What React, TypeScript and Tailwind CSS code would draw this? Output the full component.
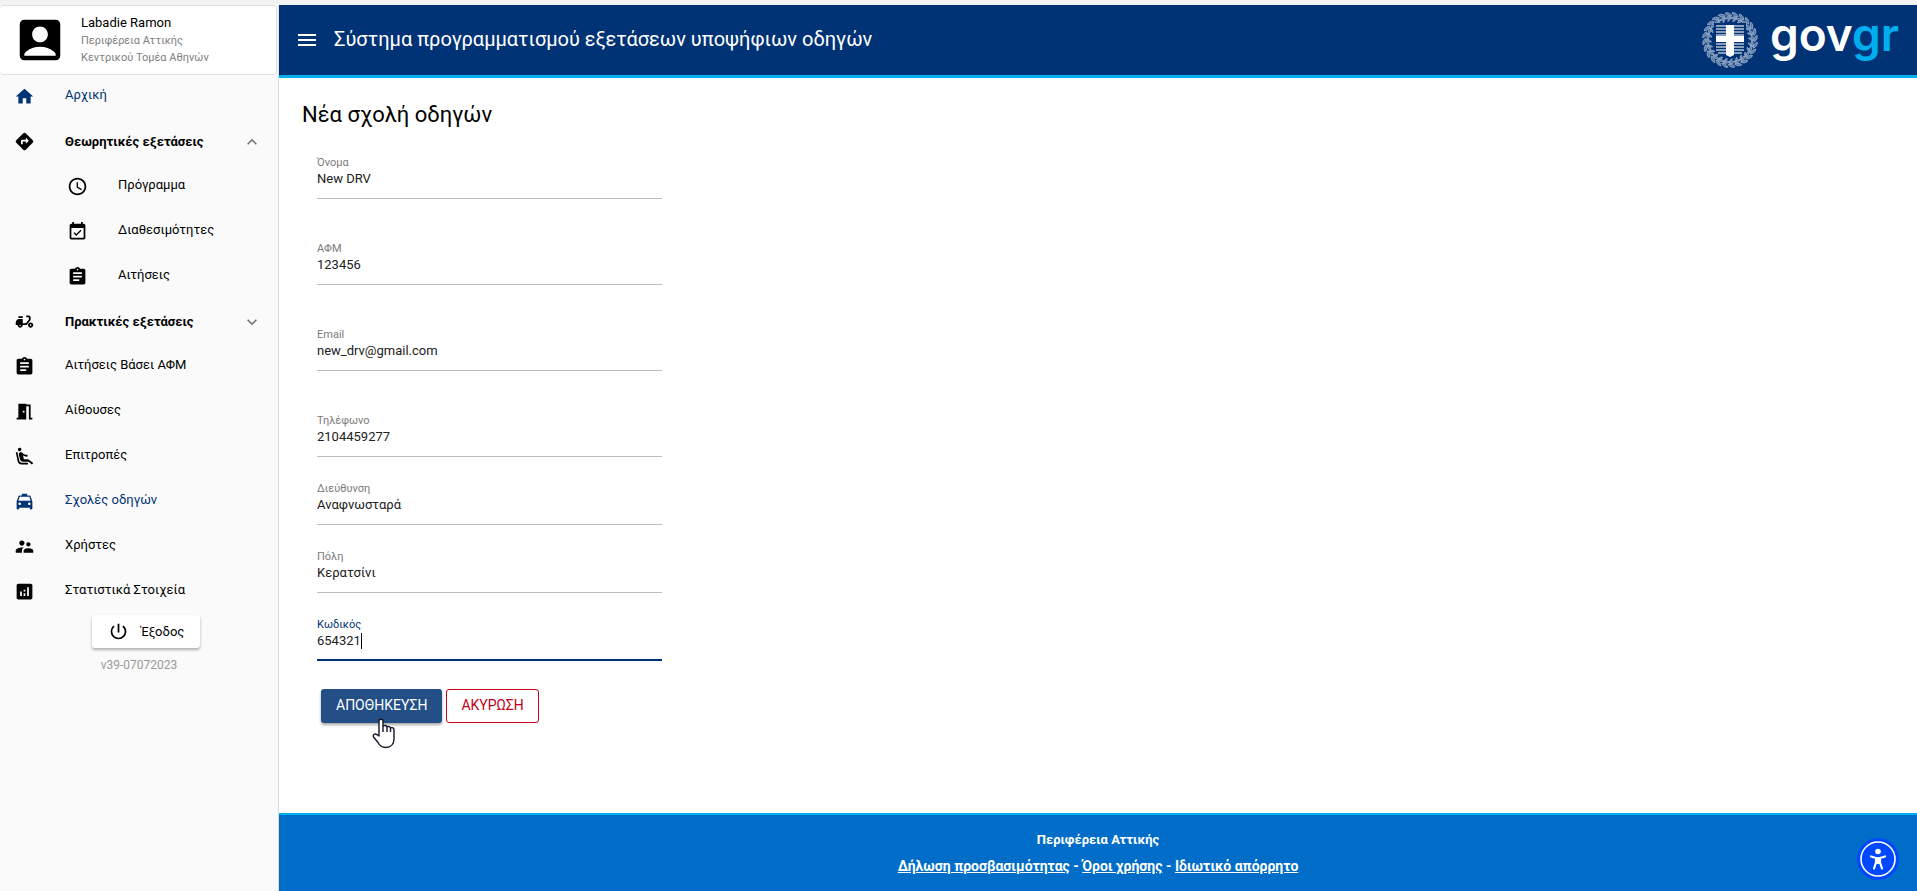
import React, { useState } from 'react';
import type { IconType } from 'react-icons';
import {
  MdAccountBox,
  MdAirlineSeatReclineExtra,
  MdAnalytics,
  MdAssignment,
  MdDeliveryDining,
  MdDirections,
  MdEventAvailable,
  MdExpandLess,
  MdExpandMore,
  MdHome,
  MdLocalTaxi,
  MdMeetingRoom,
  MdMenu,
  MdPowerSettingsNew,
  MdSchedule,
  MdSupervisorAccount,
} from 'react-icons/md';

interface NavItem {
  label: string;
  icon: IconType;
  active?: boolean;
  open?: boolean;
  children?: NavItem[];
}

interface FieldProps {
  id: string;
  label: string;
  value: string;
  type?: string;
  spaced?: boolean;
  focused?: boolean;
  onChange: (value: string) => void;
}

const navItems: NavItem[] = [
  { label: 'Αρχική', icon: MdHome, active: true },
  {
    label: 'Θεωρητικές εξετάσεις',
    icon: MdDirections,
    open: true,
    children: [
      { label: 'Πρόγραμμα', icon: MdSchedule },
      { label: 'Διαθεσιμότητες', icon: MdEventAvailable },
      { label: 'Αιτήσεις', icon: MdAssignment },
    ],
  },
  { label: 'Πρακτικές εξετάσεις', icon: MdDeliveryDining, children: [] },
  { label: 'Αιτήσεις Βάσει ΑΦΜ', icon: MdAssignment },
  { label: 'Αίθουσες', icon: MdMeetingRoom },
  { label: 'Επιτροπές', icon: MdAirlineSeatReclineExtra },
  { label: 'Σχολές οδηγών', icon: MdLocalTaxi, active: true },
  { label: 'Χρήστες', icon: MdSupervisorAccount },
  { label: 'Στατιστικά Στοιχεία', icon: MdAnalytics },
];

const fields = [
  { id: 'name', label: 'Όνομα', spaced: true },
  { id: 'afm', label: 'ΑΦΜ', spaced: true },
  { id: 'email', label: 'Email', type: 'email', spaced: true },
  { id: 'phone', label: 'Τηλέφωνο', type: 'tel' },
  { id: 'address', label: 'Διεύθυνση' },
  { id: 'city', label: 'Πόλη' },
  { id: 'code', label: 'Κωδικός', focused: true },
];

const NavLink: React.FC<{ item: NavItem; nested?: boolean }> = ({ item, nested }) => {
  const Icon = item.icon;
  return (
    <a
      href="#"
      className={`flex h-[45px] items-center ${nested ? 'pl-[67px]' : 'pl-[14px]'} ${
        item.active ? 'text-[#003375]' : 'text-black'
      }`}
    >
      <Icon className="mr-[30px] size-[21px] shrink-0" />
      <span className="pb-1 text-[13px]">{item.label}</span>
    </a>
  );
};

const NavGroup: React.FC<{ item: NavItem }> = ({ item }) => {
  const [open, setOpen] = useState(!!item.open);
  const Icon = item.icon;
  const Chevron = open ? MdExpandLess : MdExpandMore;
  return (
    <div>
      <button
        type="button"
        aria-expanded={open}
        onClick={() => setOpen(!open)}
        className="flex h-[45px] w-full items-center pl-[14px] pr-4 text-left"
      >
        <Icon className="mr-[30px] size-[21px] shrink-0" />
        <span className="flex-1 text-[13px] font-bold">{item.label}</span>
        <Chevron className="size-5 text-[#757575]" />
      </button>
      {open && item.children?.map((child) => <NavLink key={child.label} item={child} nested />)}
    </div>
  );
};

const Field: React.FC<FieldProps> = ({ id, label, value, type = 'text', spaced, focused, onChange }) => (
  <div className={spaced ? 'mb-[42px]' : 'mb-6'}>
    <label
      htmlFor={id}
      className={`block text-[11px] leading-4 ${focused ? 'text-[#003375]' : 'text-[#7b7b7b]'}`}
    >
      {label}
    </label>
    <div className="relative">
      <input
        id={id}
        type={type}
        value={value}
        onChange={(e) => onChange(e.target.value)}
        className={`block h-7 w-full bg-transparent pb-3 text-[13px] leading-4 text-[#212121] outline-none ${
          focused ? 'border-b-2 border-[#003375] caret-transparent' : 'border-b border-[#bdbdbd]'
        }`}
      />
      {focused && <span className="absolute left-11 top-0 h-4 w-px bg-black" />}
    </div>
  </div>
);

// coat of arms: laurel wreath around a striped shield with a cross
const Emblem = () => {
  const leaves = Array.from({ length: 24 }, (_, i) => i * 15);
  return (
    <svg viewBox="0 0 56 56" className="size-14" aria-hidden="true">
      <g fill="#5b7aa8" stroke="#b4c3d9" strokeWidth="0.600">
        {leaves.map((angle) => (
          <g key={angle} transform={`rotate(${angle} 28 28)`}>
            <path d="M30 3.500c-2-2.600-4.500-3.400-7-2.500c1.500 2.500 4.500 3.500 7 2.500z" />
            <path d="M29 4.500c-2.600-.6-5 .2-6 2.200c2.600.8 5-.2 6-2.200z" />
            <path d="M28.500 5.500c-1.800.8-2.800 2.200-2.700 4c1.800-.7 2.800-2.200 2.700-4z" />
          </g>
        ))}
      </g>
      <path d="M12 11h32v25c0 7-8 8-16 11C20 44 12 43 12 36z" fill="#003375" />
      <g stroke="#b4c3d9" strokeWidth="1.500">
        {[14, 17, 20, 23, 32, 35, 38].map((y) => (
          <path key={y} d={`M14 ${y}h28`} />
        ))}
        <path d="M16 41h24" />
      </g>
      <path d="M24 13h8v11h10v6H32v13l-4 2-4-2V30H14v-6h10z" fill="#fff" />
    </svg>
  );
};

const HandCursor = () => (
  <svg
    viewBox="0 0 24 32"
    className="pointer-events-none absolute left-[51px] top-[29px] z-10 h-8 w-6"
    fill="#fff"
    stroke="#15152a"
    strokeWidth="1.4"
    strokeLinejoin="round"
    aria-hidden="true"
  >
    <path d="M7 18V3c0-2.400 4-2.400 4 0v5c1.500-1 3.500-.5 4 .8c1.500-.7 3-.2 3.500 1c2-.6 3.500.3 3.500 2.200v9c0 5-3 8.500-8.500 8.500c-4 0-6-2-7.500-5L1.500 19c-1-2.500 1.500-4 3.500-2.300z" />
    <path d="M11 8v6M15 9v5M18.500 10v4" fill="none" />
  </svg>
);

const Sidebar = () => (
  <aside className="w-[279px] shrink-0 border-r border-[#dcdcdc] bg-[#fafafa]">
    <div className="mr-px flex h-[70px] items-center rounded border border-l-0 border-[#e0e0e0] bg-white pl-[13px]">
      <MdAccountBox className="mr-[14px] size-[54px] shrink-0" />
      <div>
        <p className="text-[13px] leading-[18px]">Labadie Ramon</p>
        <p className="text-[11px] leading-[17px] text-[#808080]">Περιφέρεια Αττικής</p>
        <p className="text-[11px] leading-[17px] text-[#808080]">Κεντρικού Τομέα Αθηνών</p>
      </div>
    </div>
    <nav className="-mt-px">
      {navItems.map((item) =>
        item.children ? (
          <NavGroup key={item.label} item={item} />
        ) : (
          <NavLink key={item.label} item={item} />
        ),
      )}
    </nav>
    <div className="mt-px flex flex-col items-center">
      <button
        type="button"
        className="ml-[14px] flex h-[33px] items-center gap-3 rounded-[3px] bg-white px-4 text-[13px] shadow-[0_2px_3px_rgba(0,0,0,0.3)]"
      >
        <MdPowerSettingsNew className="size-[21px]" />
        Έξοδος
      </button>
      <p className="mt-2 text-xs leading-[18px] text-[#999999]">v39-07072023</p>
    </div>
  </aside>
);

const Header = () => (
  <header className="flex h-[73px] items-center border-b-[3px] border-[#00aeef] bg-[#003375] pl-4 pr-[18px] text-white">
    <button type="button" aria-label="Μενού" className="mr-[15px]">
      <MdMenu className="size-6" />
    </button>
    <h1 className="flex-1 pb-0.5 text-xl">Σύστημα προγραμματισμού εξετάσεων υποψήφιων οδηγών</h1>
    <a href="#" className="flex items-center gap-3">
      <Emblem />
      <span className="pb-3 font-[Inter,sans-serif] text-[46px] leading-[52px] font-semibold">
        gov<span className="text-[#00aeef]">gr</span>
      </span>
    </a>
  </header>
);

const Footer = () => (
  <footer className="relative flex h-[78px] flex-col items-center border-t-2 border-[#00aeef] bg-[#006dc8] pt-[11px] text-[13px] leading-[27px] font-bold text-white">
    <p>Περιφέρεια Αττικής</p>
    <p className="text-sm leading-[27px]">
      <a href="#" className="underline">Δήλωση προσβασιμότητας</a> -{' '}
      <a href="#" className="underline">Όροι χρήσης</a> -{' '}
      <a href="#" className="underline">Ιδιωτικό απόρρητο</a>
    </p>
    <button type="button" aria-label="Προσβασιμότητα" className="absolute right-[18px] bottom-[11px]">
      <svg viewBox="0 0 42 42" className="size-[42px]">
        <circle cx="21" cy="21" r="21" fill="#0048ff" />
        <circle cx="21" cy="21" r="17" fill="none" stroke="#fff" strokeWidth="1.6" />
        <circle cx="21" cy="13.5" r="2.800" fill="#fff" />
        <path
          d="M14 18.500l5 1.500v4.500l-2 6M28 18.500l-5 1.500v4.500l2 6M19 20.500h4M20.500 20v5M21.500 20v5"
          fill="none"
          stroke="#fff"
          strokeWidth="2.200"
          strokeLinecap="round"
          strokeLinejoin="round"
        />
      </svg>
    </button>
  </footer>
);

const App: React.FC = () => {
  const [values, setValues] = useState<Record<string, string>>({
    name: 'New DRV',
    afm: '123456',
    email: 'new_drv@gmail.com',
    phone: '2104459277',
    address: 'Αναφνωσταρά',
    city: 'Κερατσίνι',
    code: '654321',
  });

  return (
    <div className="flex min-h-screen flex-col bg-white font-[Roboto,sans-serif] text-black">
      <div className="h-[5px] bg-[#f1f3f4]" />
      <div className="flex flex-1">
        <Sidebar />
        <div className="flex min-w-0 flex-1 flex-col">
          <Header />
          <main className="flex-1 px-[23px] pt-[21px]">
            <h2 className="text-[22px] leading-8">Νέα σχολή οδηγών</h2>
            <form className="ml-[15px] mt-6 max-w-[345px]" onSubmit={(e) => e.preventDefault()}>
              {fields.map((field) => (
                <Field
                  key={field.id}
                  {...field}
                  value={values[field.id]}
                  onChange={(value) => setValues({ ...values, [field.id]: value })}
                />
              ))}
              <div className="relative ml-1 mt-7 flex gap-1">
                <button
                  type="submit"
                  className="h-[34px] rounded-[3px] bg-[#234f86] px-[15px] pb-0.5 text-sm text-white shadow-[0_2px_3px_rgba(0,0,0,0.35)]"
                >
                  ΑΠΟΘΗΚΕΥΣΗ
                </button>
                <button
                  type="button"
                  className="h-[34px] rounded-[3px] border border-[#c4001a] px-[14px] pb-0.5 text-sm text-[#c4001a]"
                >
                  ΑΚΥΡΩΣΗ
                </button>
                <HandCursor />
              </div>
            </form>
          </main>
          <Footer />
        </div>
      </div>
    </div>
  );
};

export default App;
